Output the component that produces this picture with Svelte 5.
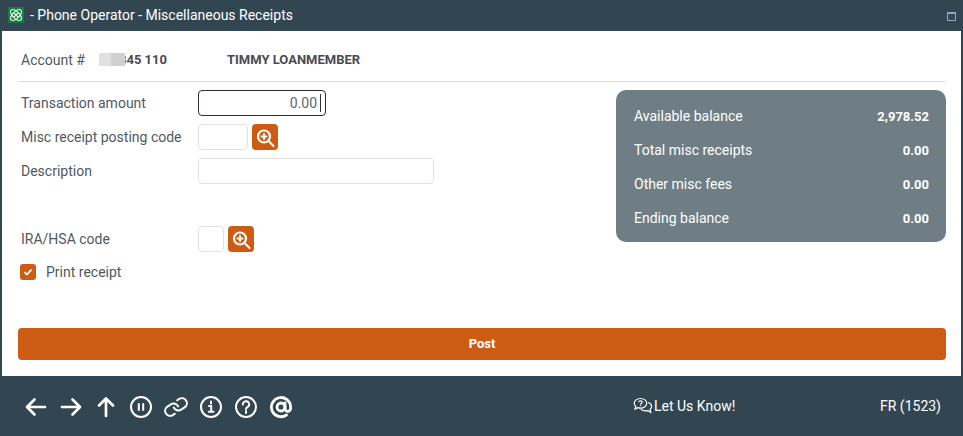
<script lang="ts">
  const summary = [
    { label: 'Available balance', value: '2,978.52' },
    { label: 'Total misc receipts', value: '0.00' },
    { label: 'Other misc fees', value: '0.00' },
    { label: 'Ending balance', value: '0.00' }
  ]
</script>

{#snippet lookup()}
  <button class="lookup" type="button" aria-label="Search">
    <svg width="22" height="22" viewBox="0 0 22 22" fill="none" stroke="#fff">
      <circle cx="10" cy="10.5" r="6" stroke-width="2.2" />
      <path d="M14.8 15.3l4.7 4.7" stroke-width="2" stroke-linecap="round" />
      <path d="M10 7.2v6.6M6.7 10.5h6.6" stroke-width="2" />
    </svg>
  </button>
{/snippet}

<div class="window">
  <header class="titlebar">
    <svg class="logo" width="16" height="16" viewBox="0 0 16 16">
      <rect width="16" height="16" rx="1" fill="#14803f" />
      <g fill="none" stroke="#e6f5ea" stroke-width="1.2">
        <ellipse cx="8" cy="8" rx="7" ry="3.4" transform="rotate(45 8 8)" />
        <ellipse cx="8" cy="8" rx="7" ry="3.4" transform="rotate(-45 8 8)" />
        <path d="M5.5 5.5l5 5M10.5 5.5l-5 5" />
      </g>
    </svg>
    <span class="title">- Phone Operator - Miscellaneous Receipts</span>
    <span class="maximize"></span>
  </header>

  <main class="body">
    <div class="account">
      <span class="account-label">Account #</span>
      <span class="account-number">
        <span class="mask"><i></i><i></i></span>
        <b>345 110</b>
      </span>
      <span class="member">TIMMY LOANMEMBER</span>
    </div>

    <div class="content">
      <form class="form">
        <div class="row">
          <label for="amount">Transaction amount</label>
          <div class="amount" id="amount">0.00<span class="caret"></span></div>
        </div>
        <div class="row">
          <label for="posting">Misc receipt posting code</label>
          <input id="posting" class="input posting" />
          {@render lookup()}
        </div>
        <div class="row">
          <label for="desc">Description</label>
          <input id="desc" class="input desc" />
        </div>
        <div class="row ira">
          <label for="ira">IRA/HSA code</label>
          <input id="ira" class="input code" />
          {@render lookup()}
        </div>
        <div class="check">
          <span class="box">
            <svg width="10" height="10" viewBox="0 0 10 10" fill="none" stroke="#fff" stroke-width="1.8">
              <path d="M1.5 5.2l2.4 2.3 4.6-4.8" />
            </svg>
          </span>
          <span>Print receipt</span>
        </div>
      </form>

      <aside class="summary">
        {#each summary as item}
          <div class="summary-row">
            <span>{item.label}</span>
            <b>{item.value}</b>
          </div>
        {/each}
      </aside>
    </div>

    <button class="post" type="button">Post</button>
  </main>

  <footer class="footer">
    <nav class="icons">
      <svg width="24" height="24" viewBox="0 0 24 24" class="ic"><path d="M21 12H3.5M10.5 4.5L3 12l7.5 7.5" /></svg>
      <svg width="24" height="24" viewBox="0 0 24 24" class="ic"><path d="M3 12h17.5M13.5 4.5L21 12l-7.5 7.5" /></svg>
      <svg width="24" height="24" viewBox="0 0 24 24" class="ic"><path d="M12 21V4M5 10.5L12 3.5l7 7" /></svg>
      <svg width="24" height="24" viewBox="0 0 24 24" class="ic thin"><circle cx="12" cy="12" r="10" /><path d="M9.8 9v6M14.2 9v6" /></svg>
      <svg width="24" height="24" viewBox="0 0 24 24" class="ic thin">
        <g transform="rotate(12 12 12)">
          <path d="M10 13a5 5 0 007.54.54l3-3a5 5 0 00-7.07-7.07l-1.72 1.71" />
          <path d="M14 11a5 5 0 00-7.54-.54l-3 3a5 5 0 007.07 7.07l1.71-1.71" />
        </g>
      </svg>
      <svg width="24" height="24" viewBox="0 0 24 24" class="ic thin"><circle cx="12" cy="12" r="10" /><path d="M10 11h2.2v5.6M9.8 16.8h4.6M12 6.5v2" /></svg>
      <svg width="24" height="24" viewBox="0 0 24 24" class="ic thin"><circle cx="12" cy="12" r="10" /><path d="M8.8 9.5a3.2 3.2 0 116 1.4c-.7 1-2.8 1.5-2.8 3.2M12 16v2" /></svg>
      <svg width="24" height="24" viewBox="0 0 24 24" class="ic at"><circle cx="12" cy="12" r="4" /><path d="M16 8v5.5a2.8 2.8 0 005.6 0V12A9.6 9.6 0 1017.5 20" /></svg>
    </nav>
    <div class="feedback">
      <svg width="20" height="18" viewBox="0 0 20 18" fill="none" stroke="#fff" stroke-width="1.2">
        <path d="M7.5 1.5C4 1.5 1.2 3.6 1.2 6.3c0 1.3.6 2.4 1.6 3.2L2 12l2.8-1.4c.8.3 1.7.5 2.7.5 3.5 0 6.3-2.1 6.3-4.8s-2.8-4.8-6.3-4.8z" />
        <path d="M15.2 5.5c2 .7 3.4 2.2 3.4 3.9 0 1.2-.6 2.2-1.6 3l.8 2.8-3-1.6c-.7.2-1.4.3-2.2.3-2 0-3.7-.7-4.8-1.8" />
        <path d="M5.8 5c.2-1.5 3.4-1.5 3.4.2 0 1-1.6 1-1.6 2.2M7.6 8v1" />
      </svg>
      <span>Let Us Know!</span>
    </div>
    <span class="branch">FR (1523)</span>
  </footer>
</div>

<style>
  :global(body) {
    margin: 0;
    background: #324652;
  }

  .window {
    width: 963px;
    height: 436px;
    display: flex;
    flex-direction: column;
    background: #324652;
    font-family: Roboto, "Liberation Sans", sans-serif;
    font-size: 14px;
    color: #4f5962;
    overflow: hidden;
  }

  .titlebar {
    height: 31px;
    flex: none;
    display: flex;
    align-items: center;
    padding: 0 7px 1px 8px;
    color: #fff;
    box-sizing: border-box;
  }

  .logo {
    margin-right: 6px;
  }

  .title {
    flex: 1;
    font-size: 14px;
  }

  .maximize {
    width: 9px;
    height: 9px;
    box-sizing: border-box;
    border: 1px solid #8fa6c4;
    border-top-width: 2px;
    margin-top: 3px;
  }

  .body {
    flex: 1;
    margin: 0 2px;
    padding: 0 15px 16px 16px;
    background: #fff;
    display: flex;
    flex-direction: column;
  }

  .account {
    height: 51px;
    flex: none;
    box-sizing: border-box;
    display: flex;
    align-items: center;
    border-bottom: 1px solid #dedede;
    padding: 7px 0 0 3px;
  }

  .account-label {
    width: 78px;
  }

  .account-number {
    position: relative;
    width: 128px;
    font-size: 13px;
    color: #4a4a52;
  }

  .account-number b {
    margin-left: 20px;
  }

  .mask {
    position: absolute;
    left: 0;
    top: 1px;
    display: flex;
    z-index: 1;
  }

  .mask i {
    width: 12px;
    height: 13px;
    background: #e0e0e0;
  }

  .mask i + i {
    width: 14px;
    background: #d0d0d0;
  }

  .member {
    font-size: 13px;
    font-weight: 700;
    color: #4a4a52;
  }

  .content {
    flex: 1;
    display: flex;
    justify-content: space-between;
    padding-top: 8px;
  }

  .form {
    display: flex;
    flex-direction: column;
    gap: 8px;
  }

  .row {
    display: flex;
    align-items: center;
    height: 26px;
  }

  .row label {
    width: 180px;
    padding-left: 3px;
    box-sizing: border-box;
  }

  .ira {
    margin-top: 34px;
  }

  .input {
    height: 26px;
    box-sizing: border-box;
    border: 1px solid #e2e2e2;
    border-radius: 4px;
    background: #fff;
    padding: 0;
    outline: none;
  }

  .posting {
    width: 50px;
  }

  .desc {
    width: 236px;
  }

  .code {
    width: 26px;
  }

  .amount {
    width: 128px;
    height: 26px;
    box-sizing: border-box;
    border: 1px solid #2a2a44;
    border-radius: 4px;
    display: flex;
    align-items: center;
    justify-content: flex-end;
    padding-right: 4px;
    color: #5c6670;
  }

  .caret {
    width: 1px;
    height: 18px;
    margin-left: 3px;
    background: #333;
  }

  .lookup {
    width: 26px;
    height: 26px;
    margin-left: 4px;
    padding: 0;
    border: none;
    border-radius: 4px;
    background: #cc5c13;
    display: flex;
    align-items: center;
    justify-content: center;
  }

  .check {
    display: flex;
    align-items: center;
    gap: 10px;
    padding-left: 2px;
    margin-top: 4px;
    height: 16px;
  }

  .box {
    width: 16px;
    height: 16px;
    border-radius: 3px;
    background: #cc5c13;
    display: flex;
    align-items: center;
    justify-content: center;
  }

  .summary {
    width: 330px;
    height: 152px;
    box-sizing: border-box;
    padding: 9px 17px 7px 18px;
    background: #6e7e84;
    border-radius: 10px;
    color: #fff;
  }

  .summary-row {
    height: 34px;
    display: flex;
    align-items: center;
    justify-content: space-between;
  }

  .summary-row b {
    font-size: 13px;
  }

  .post {
    height: 32px;
    flex: none;
    border: none;
    border-radius: 4px;
    background: #cc5c13;
    color: #fff;
    padding: 0 0 2px;
    font: 700 13px Roboto, "Liberation Sans", sans-serif;
  }

  .footer {
    height: 60px;
    flex: none;
    box-sizing: border-box;
    display: flex;
    align-items: center;
    padding: 0 22px 0 24px;
    color: #fff;
  }

  .icons {
    display: flex;
    align-items: center;
    gap: 11px;
    width: 609px;
    margin-top: 2px;
  }

  .ic {
    fill: none;
    stroke: #fff;
    stroke-width: 2.7;
    stroke-linecap: round;
    stroke-linejoin: round;
  }

  .ic.thin {
    stroke-width: 2;
  }

  .ic.at {
    stroke-width: 2.8;
  }

  .feedback {
    display: flex;
    align-items: center;
    gap: 1px;
    flex: 1;
    margin-bottom: 1px;
  }

  .branch {
    font-size: 14px;
    margin-bottom: 1px;
  }
</style>
